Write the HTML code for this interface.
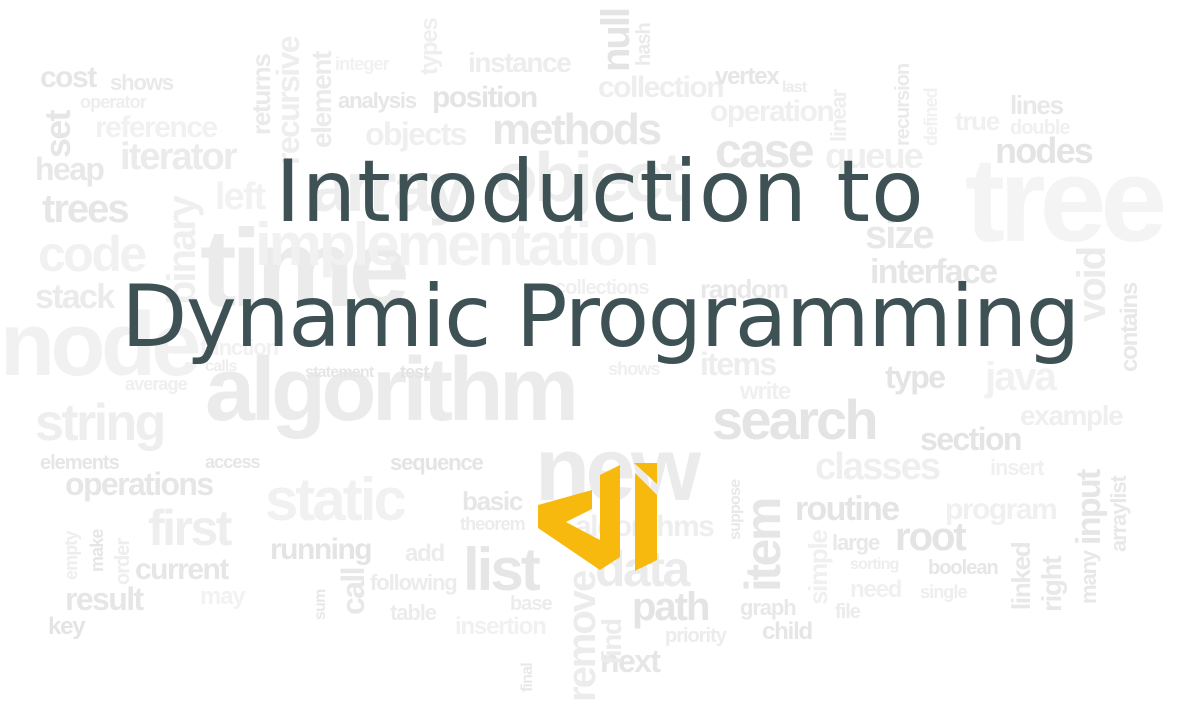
<!DOCTYPE html>
<html><head><meta charset="utf-8"><style>
html,body{margin:0;padding:0;width:1200px;height:700px;overflow:hidden;background:#fff}
.w{position:absolute;font-family:"Liberation Sans",sans-serif;font-weight:bold;line-height:1;letter-spacing:-0.05em;white-space:nowrap;color:#ececec}
.v{transform:rotate(-90deg);transform-origin:0 0}
.t{position:absolute;left:0;width:1200px;text-align:center;font-family:"DejaVu Sans","Liberation Sans",sans-serif;color:#3e5154;font-size:86px;line-height:1;letter-spacing:1px}
</style></head><body>
<span class="w" style="left:40px;top:63px;font-size:30px;color:#e6e6e6">cost</span>
<span class="w" style="left:110px;top:72px;font-size:22px;color:#e9e9e9">shows</span>
<span class="w" style="left:80px;top:93px;font-size:18px;color:#eee">operator</span>
<span class="w v" style="left:40px;top:158px;font-size:36px;color:#e6e6e6">set</span>
<span class="w" style="left:95px;top:113px;font-size:30px;color:#f1f1f1">reference</span>
<span class="w v" style="left:248px;top:135px;font-size:26px;color:#eaeaea">returns</span>
<span class="w v" style="left:272px;top:165px;font-size:32px;color:#eeeeee">recursive</span>
<span class="w v" style="left:308px;top:148px;font-size:28px;color:#ebebeb">element</span>
<span class="w" style="left:335px;top:55px;font-size:18px;color:#f1f1f1">integer</span>
<span class="w v" style="left:418px;top:75px;font-size:24px;color:#efefef">types</span>
<span class="w" style="left:468px;top:49px;font-size:28px;color:#ededed">instance</span>
<span class="w v" style="left:596px;top:72px;font-size:40px;color:#e4e4e4">null</span>
<span class="w v" style="left:634px;top:66px;font-size:20px;color:#eaeaea">hash</span>
<span class="w" style="left:338px;top:90px;font-size:22px;color:#e6e6e6">analysis</span>
<span class="w" style="left:432px;top:83px;font-size:30px;color:#e4e4e4">position</span>
<span class="w" style="left:598px;top:73px;font-size:30px;color:#eeeeee">collection</span>
<span class="w" style="left:715px;top:65px;font-size:24px;color:#e6e6e6">vertex</span>
<span class="w" style="left:782px;top:80px;font-size:16px;color:#ececec">last</span>
<span class="w" style="left:365px;top:118px;font-size:32px;color:#efefef">objects</span>
<span class="w" style="left:492px;top:108px;font-size:44px;color:#e6e6e6">methods</span>
<span class="w" style="left:710px;top:97px;font-size:30px;color:#efefef">operation</span>
<span class="w v" style="left:828px;top:142px;font-size:22px;color:#eeeeee">linear</span>
<span class="w v" style="left:893px;top:146px;font-size:20px;color:#eaeaea">recursion</span>
<span class="w v" style="left:922px;top:146px;font-size:18px;color:#f1f1f1">defined</span>
<span class="w" style="left:1010px;top:92px;font-size:26px;color:#e8e8e8">lines</span>
<span class="w" style="left:955px;top:108px;font-size:26px;color:#f0f0f0">true</span>
<span class="w" style="left:1010px;top:118px;font-size:20px;color:#f0f0f0">double</span>
<span class="w" style="left:35px;top:153px;font-size:32px;color:#e8e8e8">heap</span>
<span class="w" style="left:120px;top:138px;font-size:38px;color:#ebebeb">iterator</span>
<span class="w" style="left:715px;top:128px;font-size:48px;color:#e6e6e6">case</span>
<span class="w" style="left:825px;top:138px;font-size:36px;color:#efefef">queue</span>
<span class="w" style="left:995px;top:133px;font-size:36px;color:#e4e4e4">nodes</span>
<span class="w" style="left:965px;top:140px;font-size:120px;color:#f4f4f4">tree</span>
<span class="w" style="left:42px;top:189px;font-size:40px;color:#e6e6e6">trees</span>
<span class="w v" style="left:162px;top:305px;font-size:40px;color:#efefef">binary</span>
<span class="w" style="left:215px;top:178px;font-size:38px;color:#f2f2f2">left</span>
<span class="w" style="left:310px;top:152px;font-size:70px;color:#ededed">array</span>
<span class="w" style="left:495px;top:142px;font-size:70px;color:#ededed">object</span>
<span class="w" style="left:200px;top:214px;font-size:110px;color:#ebebeb">time</span>
<span class="w" style="left:38px;top:229px;font-size:50px;color:#f1f1f1">code</span>
<span class="w" style="left:35px;top:280px;font-size:34px;color:#ebebeb">stack</span>
<span class="w" style="left:0px;top:300px;font-size:90px;color:#f1f1f1">node</span>
<span class="w" style="left:255px;top:215px;font-size:60px;color:#f1f1f1">implementation</span>
<span class="w" style="left:865px;top:215px;font-size:40px;color:#e8e8e8">size</span>
<span class="w" style="left:870px;top:255px;font-size:34px;color:#e6e6e6">interface</span>
<span class="w" style="left:700px;top:276px;font-size:26px;color:#e8e8e8">random</span>
<span class="w" style="left:555px;top:278px;font-size:20px;color:#efefef">collections</span>
<span class="w v" style="left:1072px;top:322px;font-size:40px;color:#ebebeb">void</span>
<span class="w v" style="left:1118px;top:372px;font-size:24px;color:#e8e8e8">contains</span>
<span class="w" style="left:885px;top:361px;font-size:32px;color:#e4e4e4">type</span>
<span class="w" style="left:985px;top:357px;font-size:40px;color:#f1f1f1">java</span>
<span class="w" style="left:712px;top:392px;font-size:56px;color:#e4e4e4">search</span>
<span class="w" style="left:205px;top:345px;font-size:90px;color:#ebebeb">algorithm</span>
<span class="w" style="left:35px;top:397px;font-size:52px;color:#eeeeee">string</span>
<span class="w" style="left:125px;top:375px;font-size:18px;color:#efefef">average</span>
<span class="w" style="left:200px;top:337px;font-size:22px;color:#f1f1f1">function</span>
<span class="w" style="left:205px;top:359px;font-size:16px;color:#eeeeee">calls</span>
<span class="w" style="left:305px;top:365px;font-size:16px;color:#e6e6e6">statement</span>
<span class="w" style="left:400px;top:363px;font-size:18px;color:#e4e4e4">test</span>
<span class="w" style="left:608px;top:360px;font-size:18px;color:#efefef">shows</span>
<span class="w" style="left:700px;top:348px;font-size:32px;color:#ededed">items</span>
<span class="w" style="left:740px;top:380px;font-size:24px;color:#f0f0f0">write</span>
<span class="w" style="left:920px;top:423px;font-size:32px;color:#e4e4e4">section</span>
<span class="w" style="left:1020px;top:402px;font-size:28px;color:#efefef">example</span>
<span class="w" style="left:815px;top:448px;font-size:38px;color:#efefef">classes</span>
<span class="w" style="left:990px;top:457px;font-size:22px;color:#f0f0f0">insert</span>
<span class="w" style="left:40px;top:453px;font-size:20px;color:#e6e6e6">elements</span>
<span class="w" style="left:205px;top:453px;font-size:18px;color:#e6e6e6">access</span>
<span class="w" style="left:390px;top:452px;font-size:22px;color:#e4e4e4">sequence</span>
<span class="w" style="left:535px;top:425px;font-size:90px;color:#ebebeb">new</span>
<span class="w" style="left:65px;top:468px;font-size:32px;color:#e6e6e6">operations</span>
<span class="w" style="left:265px;top:470px;font-size:60px;color:#f1f1f1">static</span>
<span class="w" style="left:462px;top:488px;font-size:26px;color:#e6e6e6">basic</span>
<span class="w" style="left:460px;top:515px;font-size:18px;color:#ececec">theorem</span>
<span class="w" style="left:148px;top:503px;font-size:50px;color:#eeeeee">first</span>
<span class="w" style="left:795px;top:492px;font-size:34px;color:#e4e4e4">routine</span>
<span class="w" style="left:945px;top:495px;font-size:30px;color:#f0f0f0">program</span>
<span class="w" style="left:895px;top:517px;font-size:40px;color:#e4e4e4">root</span>
<span class="w v" style="left:1072px;top:545px;font-size:34px;color:#e6e6e6">input</span>
<span class="w v" style="left:1078px;top:604px;font-size:22px;color:#e8e8e8">many</span>
<span class="w v" style="left:1108px;top:552px;font-size:22px;color:#e8e8e8">arraylist</span>
<span class="w v" style="left:738px;top:592px;font-size:50px;color:#e6e6e6">item</span>
<span class="w v" style="left:728px;top:540px;font-size:16px;color:#e8e8e8">suppose</span>
<span class="w" style="left:270px;top:535px;font-size:30px;color:#e4e4e4">running</span>
<span class="w" style="left:405px;top:542px;font-size:24px;color:#ececec">add</span>
<span class="w" style="left:463px;top:540px;font-size:60px;color:#e6e6e6">list</span>
<span class="w" style="left:595px;top:544px;font-size:50px;color:#ebebeb">data</span>
<span class="w" style="left:575px;top:512px;font-size:30px;color:#eeeeee">algorithms</span>
<span class="w" style="left:135px;top:555px;font-size:30px;color:#e6e6e6">current</span>
<span class="w" style="left:832px;top:532px;font-size:22px;color:#e8e8e8">large</span>
<span class="w" style="left:928px;top:558px;font-size:20px;color:#e6e6e6">boolean</span>
<span class="w" style="left:850px;top:557px;font-size:16px;color:#eeeeee">sorting</span>
<span class="w" style="left:850px;top:578px;font-size:24px;color:#f0f0f0">need</span>
<span class="w" style="left:920px;top:583px;font-size:18px;color:#eeeeee">single</span>
<span class="w" style="left:370px;top:572px;font-size:22px;color:#ececec">following</span>
<span class="w v" style="left:337px;top:615px;font-size:32px;color:#e8e8e8">call</span>
<span class="w v" style="left:313px;top:620px;font-size:16px;color:#e8e8e8">sum</span>
<span class="w" style="left:65px;top:583px;font-size:32px;color:#e6e6e6">result</span>
<span class="w" style="left:200px;top:585px;font-size:24px;color:#f2f2f2">may</span>
<span class="w v" style="left:1008px;top:610px;font-size:26px;color:#e8e8e8">linked</span>
<span class="w v" style="left:1038px;top:612px;font-size:28px;color:#e8e8e8">right</span>
<span class="w v" style="left:805px;top:605px;font-size:26px;color:#f0f0f0">simple</span>
<span class="w" style="left:632px;top:587px;font-size:40px;color:#e4e4e4">path</span>
<span class="w" style="left:740px;top:597px;font-size:22px;color:#e8e8e8">graph</span>
<span class="w" style="left:835px;top:602px;font-size:20px;color:#ececec">file</span>
<span class="w" style="left:390px;top:602px;font-size:22px;color:#ececec">table</span>
<span class="w" style="left:510px;top:594px;font-size:20px;color:#ececec">base</span>
<span class="w" style="left:455px;top:615px;font-size:24px;color:#f1f1f1">insertion</span>
<span class="w" style="left:665px;top:626px;font-size:20px;color:#ececec">priority</span>
<span class="w" style="left:762px;top:620px;font-size:24px;color:#e6e6e6">child</span>
<span class="w" style="left:48px;top:615px;font-size:24px;color:#e4e4e4">key</span>
<span class="w" style="left:600px;top:645px;font-size:32px;color:#e6e6e6">next</span>
<span class="w v" style="left:562px;top:702px;font-size:40px;color:#ececec">remove</span>
<span class="w v" style="left:598px;top:665px;font-size:28px;color:#ececec">find</span>
<span class="w v" style="left:520px;top:692px;font-size:16px;color:#e8e8e8">final</span>
<span class="w v" style="left:62px;top:580px;font-size:18px;color:#eeeeee">empty</span>
<span class="w v" style="left:88px;top:572px;font-size:18px;color:#e6e6e6">make</span>
<span class="w v" style="left:113px;top:585px;font-size:20px;color:#eeeeee">order</span>

<div class="t" style="top:149px">Introduction to</div>
<div class="t" style="top:274px;letter-spacing:-1.5px">Dynamic Programming</div>

<svg style="position:absolute;left:0;top:0" width="1200" height="700" viewBox="0 0 1200 700">
<polygon fill="#f7b90e" points="538,505 592,490 592,509 566,522 600,540 600,475 620,465 620,557 600,570 538,528"/>
<polygon fill="#f7b90e" points="635,473 657,495 657,560 635,571"/>
<polygon fill="#f7b90e" points="634,463 657,463 657,484"/>
</svg>
</body></html>
